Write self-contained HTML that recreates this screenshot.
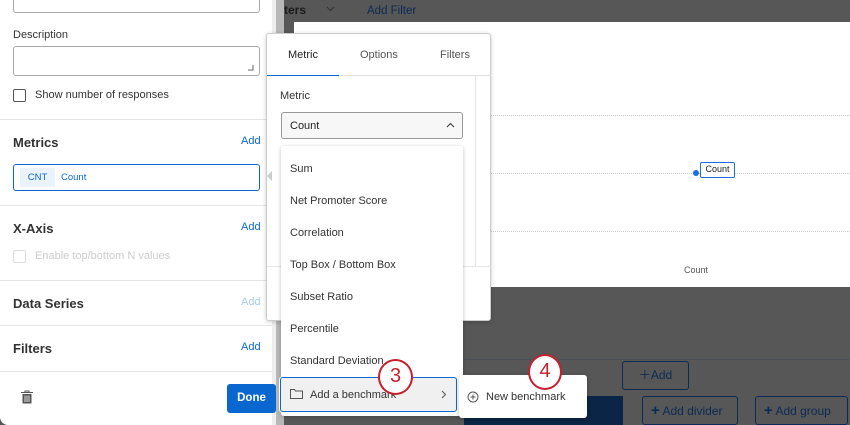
<!DOCTYPE html>
<html><head><style>
*{box-sizing:border-box;margin:0;padding:0}
body{width:850px;height:425px;overflow:hidden;position:relative;background:#565656;font-family:"Liberation Sans",sans-serif;font-size:11px;color:#222}
.a{position:absolute}
.blue{color:#0b67d0}
</style></head><body>
<div class="a" style="left:283px;top:0;width:567px;height:425px;background:#575757"></div>
<div class="a" style="left:284px;top:3px;font-size:12px;font-weight:bold;color:#1a1a1a">ters</div>
<svg class="a" style="left:326px;top:6px" width="9" height="6"><path d="M1 1L4.5 4.5L8 1" stroke="#333" fill="none"/></svg>
<div class="a" style="left:367px;top:5px;font-size:11.5px;color:#0b2a55">Add Filter</div>
<div class="a" style="left:294px;top:22px;width:556px;height:265px;background:#fff"></div>
<div class="a" style="left:467px;top:115px;width:383px;border-top:1px dotted #ccc"></div>
<div class="a" style="left:467px;top:173px;width:383px;border-top:1px dotted #ccc"></div>
<div class="a" style="left:467px;top:231px;width:383px;border-top:1px dotted #ccc"></div>
<div class="a" style="left:693px;top:170px;width:6px;height:6px;border-radius:50%;background:#1a6fe0"></div>
<div class="a" style="left:700px;top:162px;width:35px;height:16px;border:1.5px solid #1a6fe0;border-radius:2px;font-size:9px;text-align:center;line-height:13px;background:#fff">Count</div>
<div class="a" style="left:684px;top:265px;font-size:9px;color:#555">Count</div>
<div class="a" style="left:283px;top:359px;width:567px;border-top:1px solid #4a4e58"></div>
<div class="a" style="left:622px;top:361px;width:67px;height:29px;border:1px solid #0b2a55;border-radius:3px;color:#0b2a55;font-size:12px;line-height:27px;text-align:center">＋Add</div>
<div class="a" style="left:464px;top:396px;width:159px;height:29px;background:#0a2545"></div>
<div class="a" style="left:642px;top:396px;width:96px;height:29px;border:1px solid #0b2a55;border-radius:3px;color:#0b2a55;font-size:12px;line-height:27px;padding-left:8px"><b style="font-size:15px">+</b> Add divider</div>
<div class="a" style="left:755px;top:396px;width:93px;height:29px;border:1px solid #0b2a55;border-radius:3px;color:#0b2a55;font-size:12px;line-height:27px;padding-left:8px"><b style="font-size:15px">+</b> Add group</div>
<div class="a" style="left:272px;top:0;width:4px;height:425px;background:#eee"></div>
<div class="a" style="left:276px;top:0;width:8px;height:425px;background:#b8b8b8"></div>
<div class="a" style="left:0;top:0;width:272px;height:425px;background:#fff;border-bottom-left-radius:8px"></div>
<div class="a" style="left:13px;top:-5px;width:247px;height:18px;border:1px solid #aaa;border-radius:3px"></div>
<div class="a" style="left:13px;top:29px;font-size:11px;color:#333">Description</div>
<div class="a" style="left:13px;top:46px;width:247px;height:30px;border:1px solid #aaa;border-radius:3px"></div>
<svg class="a" style="left:247px;top:64px" width="8" height="8"><path d="M6 1V6H1" stroke="#666" fill="none"/></svg>
<div class="a" style="left:13px;top:89px;width:13px;height:13px;border:1px solid #555;border-radius:2px"></div>
<div class="a" style="left:35px;top:89px;color:#333">Show number of responses</div>
<div class="a" style="left:0;top:119px;width:272px;border-top:1px solid #e5e5e5"></div>
<div class="a" style="left:13px;top:135px;font-size:13px;font-weight:bold;color:#333">Metrics</div>
<div class="a blue" style="left:241px;top:135px">Add</div>
<div class="a" style="left:13px;top:164px;width:247px;height:27px;border:1px solid #0b67d0;border-radius:3px"></div>
<div class="a" style="left:20px;top:168px;width:35px;height:19px;background:#eaf2fc;color:#0b67d0;font-size:9.5px;text-align:center;line-height:19px">CNT</div>
<div class="a blue" style="left:61px;top:172px;font-size:9.5px">Count</div>
<div class="a" style="left:0;top:205px;width:272px;border-top:1px solid #e5e5e5"></div>
<div class="a" style="left:13px;top:221px;font-size:13px;font-weight:bold;color:#333">X-Axis</div>
<div class="a blue" style="left:241px;top:221px">Add</div>
<div class="a" style="left:13px;top:250px;width:13px;height:13px;border:1px solid #ddd;border-radius:2px"></div>
<div class="a" style="left:35px;top:250px;color:#ccc">Enable top/bottom N values</div>
<div class="a" style="left:0;top:280px;width:272px;border-top:1px solid #e5e5e5"></div>
<div class="a" style="left:13px;top:296px;font-size:13px;font-weight:bold;color:#333">Data Series</div>
<div class="a" style="left:241px;top:296px;color:#a8c8ee">Add</div>
<div class="a" style="left:0;top:325px;width:272px;border-top:1px solid #e5e5e5"></div>
<div class="a" style="left:13px;top:341px;font-size:13px;font-weight:bold;color:#333">Filters</div>
<div class="a blue" style="left:241px;top:341px">Add</div>
<div class="a" style="left:0;top:371px;width:272px;border-top:1px solid #e5e5e5"></div>
<svg class="a" style="left:21px;top:390px" width="12" height="14"><path d="M0 2.5H12M4 2.5V1H8V2.5" stroke="#555" fill="none"/><rect x="1.5" y="4" width="9" height="9.5" fill="#555"/><path d="M4 5.5V12M6 5.5V12M8 5.5V12" stroke="#fff" stroke-width=".8"/></svg>
<div class="a" style="left:227px;top:384px;width:49px;height:29px;background:#0b67d0;border-radius:3px;color:#fff;font-weight:bold;font-size:11.5px;text-align:center;line-height:29px">Done</div>
<div class="a" style="left:266px;top:33px;width:225px;height:288px;background:#fff;border:1px solid #ccc;border-radius:3px;box-shadow:0 1px 4px rgba(0,0,0,.2)"></div>
<div class="a" style="left:288px;top:49px;font-size:11px;color:#222">Metric</div>
<div class="a" style="left:360px;top:49px;font-size:11px;color:#555">Options</div>
<div class="a" style="left:440px;top:49px;font-size:11px;color:#555">Filters</div>
<div class="a" style="left:267px;top:75px;width:224px;border-top:1px solid #e0e0e0"></div>
<div class="a" style="left:267px;top:75px;width:72px;border-top:1px solid #0b67d0"></div>
<div class="a" style="left:475px;top:76px;width:1px;height:190px;background:#e5e5e5"></div>
<div class="a" style="left:267px;top:266px;width:224px;border-top:1px solid #e5e5e5"></div>
<div class="a" style="left:280px;top:90px;font-size:11px;color:#333">Metric</div>
<div class="a" style="left:281px;top:112px;width:182px;height:27px;border:1px solid #999;border-radius:3px;background:#f7f7f7;padding-left:8px;line-height:27px;font-size:11px">Count</div>
<svg class="a" style="left:446px;top:122px" width="9" height="6"><path d="M1 5L4.5 1.5L8 5" stroke="#333" fill="none"/></svg>
<div class="a" style="left:262px;top:171px;width:0;height:0;border:5px solid transparent;border-right-color:#ccc"></div>
<div class="a" style="left:281px;top:146px;width:182px;height:270px;background:#fff;border-radius:3px;box-shadow:0 1px 4px rgba(0,0,0,.25)"></div>
<div class="a" style="left:290px;top:153px;font-size:11px;color:#333;line-height:32px">Sum<br>Net Promoter Score<br>Correlation<br>Top Box / Bottom Box<br>Subset Ratio<br>Percentile<br>Standard Deviation</div>
<div class="a" style="left:280px;top:377px;width:177px;height:35px;border:1.5px solid #0b67d0;border-radius:3px;background:#f0f0f0;box-shadow:0 0 0 1px #fff"></div>
<svg class="a" style="left:290px;top:388px" width="13" height="11"><path d="M.5 1.5H4.5L5.5 3H12.5V10.5H.5Z" stroke="#555" fill="none"/></svg>
<div class="a" style="left:310px;top:389px;font-size:11px;color:#333">Add a benchmark</div>
<svg class="a" style="left:441px;top:390px" width="6" height="9"><path d="M1 1L4.5 4.5L1 8" stroke="#555" fill="none"/></svg>
<div class="a" style="left:459px;top:375px;width:128px;height:43px;background:#fff;border-radius:3px;box-shadow:0 1px 4px rgba(0,0,0,.25)"></div>
<svg class="a" style="left:467px;top:391px" width="12" height="12"><circle cx="6" cy="6" r="5" stroke="#555" fill="none"/><path d="M6 3.5V8.5M3.5 6H8.5" stroke="#555"/></svg>
<div class="a" style="left:486px;top:391px;font-size:11px;color:#333">New benchmark</div>
<div class="a" style="left:378px;top:359px;width:35px;height:36px;border:2.5px solid #c5202e;border-radius:50%;background:#fff;color:#c5202e;font-size:20px;text-align:center;line-height:31px">3</div>
<div class="a" style="left:528px;top:354px;width:34px;height:36px;border:2.5px solid #c5202e;border-radius:50%;background:#fff;color:#c5202e;font-size:20px;text-align:center;line-height:31px">4</div>
</body></html>
